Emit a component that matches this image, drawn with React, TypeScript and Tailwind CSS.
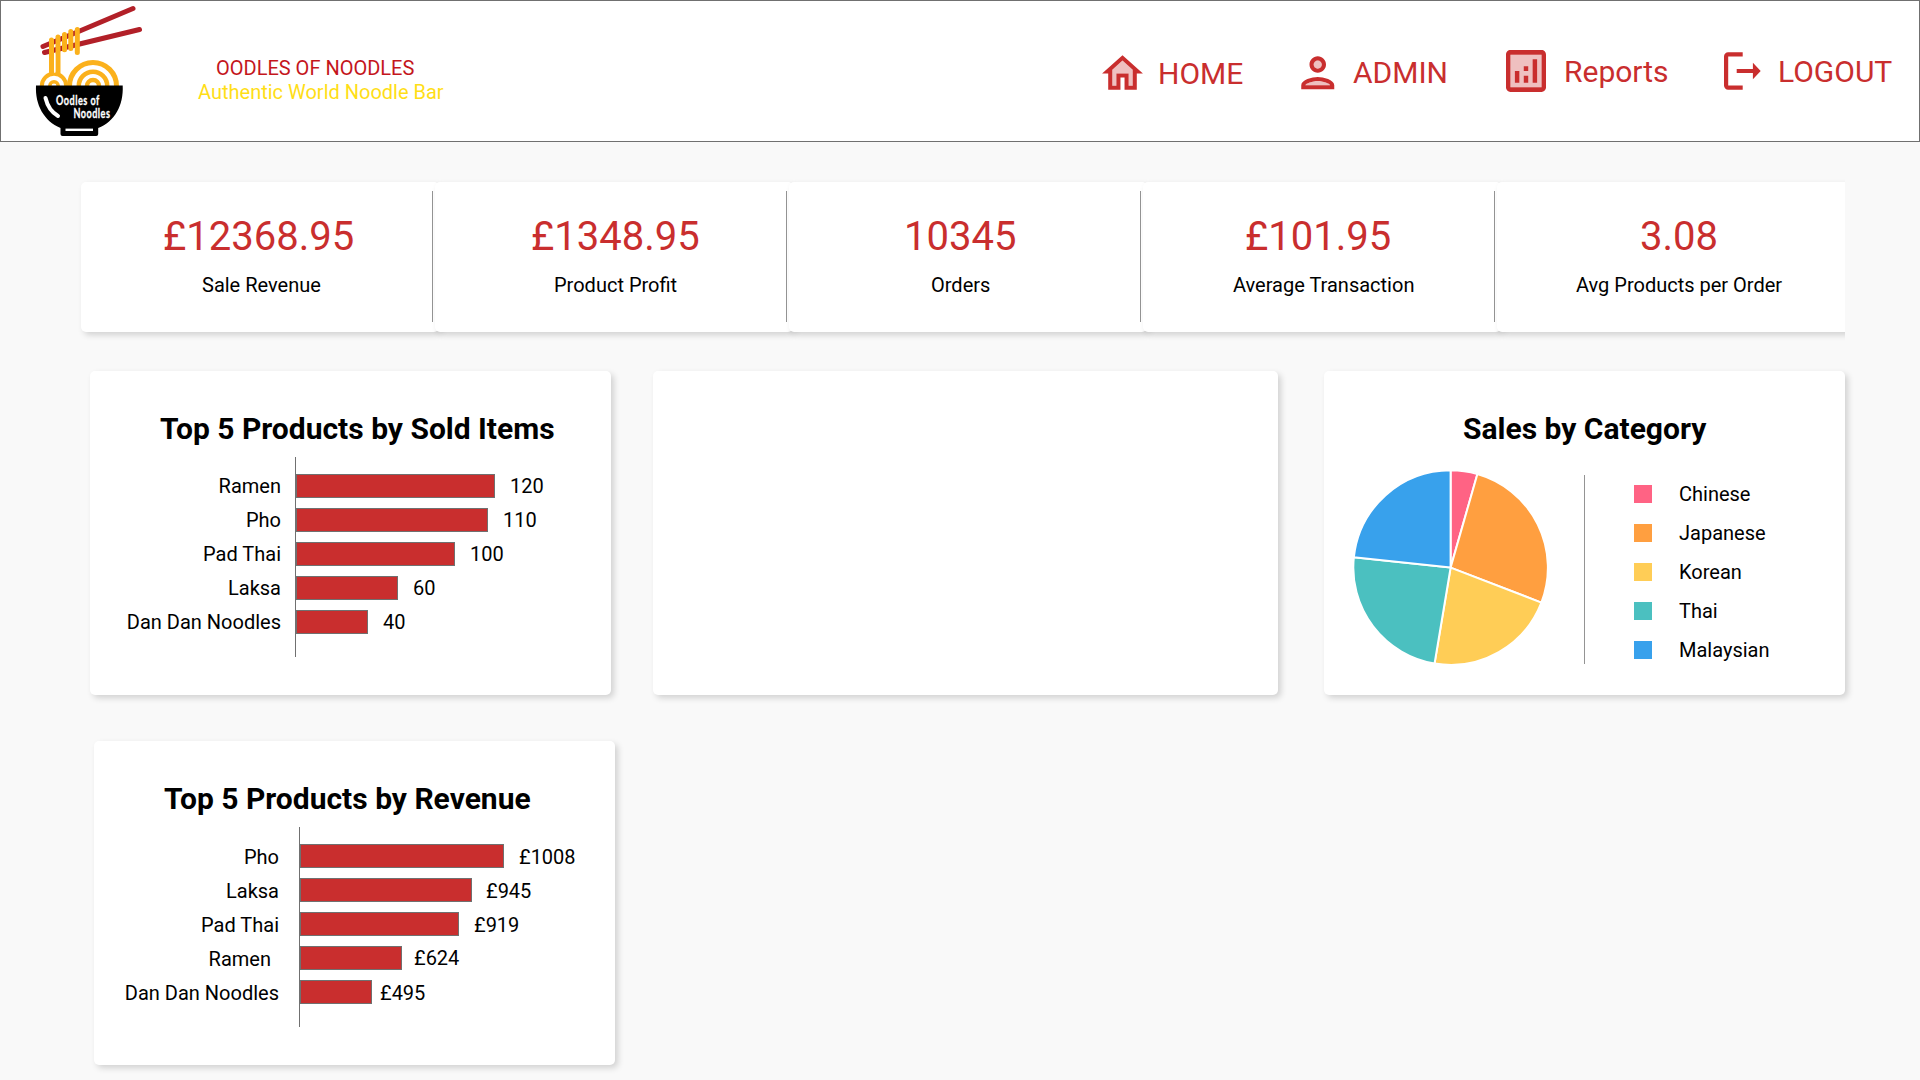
import React from 'react';

const stats = [
  { value: '£12368.95', label: 'Sale Revenue', vx: 'left-[82px]', lx: 'left-[121px]', line: true },
  { value: '£1348.95', label: 'Product Profit', vx: 'left-[96px]', lx: 'left-[119px]', line: true },
  { value: '10345', label: 'Orders', vx: 'left-[115px]', lx: 'left-[142px]', line: true },
  { value: '£101.95', label: 'Average Transaction', vx: 'left-[102px]', lx: 'left-[90px]', line: true },
  { value: '3.08', label: 'Avg Products per Order', vx: 'left-[143px]', lx: 'left-[79px]', line: false },
];

type Row = { name: string; value: string; bar: string; shift?: string; lift?: string; gap: string };

const sold: Row[] = [
  { name: 'Ramen', value: '120', bar: 'w-[199px]', gap: 'ml-[15px]' },
  { name: 'Pho', value: '110', bar: 'w-[192px]', gap: 'ml-[15px]' },
  { name: 'Pad Thai', value: '100', bar: 'w-[159px]', gap: 'ml-[15px]' },
  { name: 'Laksa', value: '60', bar: 'w-[102px]', gap: 'ml-[15px]' },
  { name: 'Dan Dan Noodles', value: '40', bar: 'w-[72px]', gap: 'ml-[15px]' },
];

const revenue: Row[] = [
  { name: 'Pho', value: '£1008', bar: 'w-[204px]', gap: 'ml-[15px]' },
  { name: 'Laksa', value: '£945', bar: 'w-[172px]', gap: 'ml-[14px]' },
  { name: 'Pad Thai', value: '£919', bar: 'w-[159px]', gap: 'ml-[15px]' },
  { name: 'Ramen', value: '£624', bar: 'w-[102px]', gap: 'ml-[12px]', shift: 'pr-2', lift: '-mt-px' },
  { name: 'Dan Dan Noodles', value: '£495', bar: 'w-[72px]', gap: 'ml-[8px]' },
];

const slices = [
  { name: 'Chinese', from: 0, to: 16, fill: '#ff6384', bg: 'bg-[#ff6384]' },
  { name: 'Japanese', from: 16, to: 111.1, fill: '#ff9f40', bg: 'bg-[#ff9f40]' },
  { name: 'Korean', from: 111.1, to: 189.5, fill: '#ffcd56', bg: 'bg-[#ffcd56]' },
  { name: 'Thai', from: 189.5, to: 276.1, fill: '#4bc0c0', bg: 'bg-[#4bc0c0]' },
  { name: 'Malaysian', from: 276.1, to: 360, fill: '#38a1ec', bg: 'bg-[#38a1ec]' },
];

const CARD = 'rounded-[5px] bg-white shadow-[3px_3px_6px_rgba(0,0,0,0.16)]';

function Logo() {
  return (
    <svg width="120" height="134" viewBox="30 4 120 134" className="block">
      <g stroke="#b22028" strokeWidth="5" strokeLinecap="round">
        <path d="M43 46.5L133 8.5" />
        <path d="M44.5 52.5L139.5 29.5" />
      </g>
      <g fill="none" stroke="#fbb11c">
        <circle cx="93" cy="86" r="23.500" strokeWidth="5" />
        <circle cx="93" cy="86" r="14.200" strokeWidth="4.500" />
        <circle cx="93" cy="86" r="6" strokeWidth="4.500" />
        <circle cx="54" cy="86" r="12.200" strokeWidth="4" />
        <circle cx="54" cy="86" r="4.200" strokeWidth="3.500" />
      </g>
      <g stroke="#fbb11c" strokeLinecap="round" strokeWidth="5">
        <path d="M51.500 40V73M58 37V73M64.500 34.500V49.800M70.800 31.500V48.500M77.300 29.500V52.500" />
      </g>
      <path d="M54.800 54V73" stroke="#fff" strokeWidth="1" />
      <path d="M36 85.500h86.700c1 20-8 36-24.500 42.500V134a2 2 0 0 1-2 2H62.500a2 2 0 0 1-2-2v-6C44 121 35 105 36 85.500z" />
      <path d="M45.500 98q3 12.500 12.500 18" fill="none" stroke="#fff" strokeWidth="4" strokeLinecap="round" />
      <path d="M65.500 129.800H93" stroke="#fff" strokeWidth="2.400" />
      <g fill="#fff" stroke="#fff" strokeWidth=".3" fontFamily="Lato, sans-serif" fontWeight="700" fontSize="13">
        <text transform="translate(56 104.700) scale(.7 1)" textLength="62">Oodles of</text>
        <text transform="translate(73.500 118) scale(.7 1)" textLength="52">Noodles</text>
      </g>
    </svg>
  );
}

function HomeIcon() {
  return (
    <svg width="49" height="49" viewBox="0 0 24 24" fill="#c92e2e" className="block">
      <path d="M7 10.190V18h2v-6h6v6h2v-7.810l-5-4.500z" opacity=".3" />
      <path d="M12 3L2 12h3v8h6v-6h2v6h6v-8h3L12 3zm5 15h-2v-6H9v6H7v-7.810l5-4.500 5 4.500V18z" />
    </svg>
  );
}

function PersonIcon() {
  return (
    <svg width="49.5" height="49.5" viewBox="0 0 24 24" fill="#c92e2e" className="block">
      <g opacity=".3">
        <path d="M12 16c-2.690 0-5.770 1.280-6 2h12c-.2-.71-3.300-2-6-2z" />
        <circle cx="12" cy="8" r="2" />
      </g>
      <path d="M12 12c2.210 0 4-1.790 4-4s-1.790-4-4-4-4 1.790-4 4 1.790 4 4 4zm0-6c1.100 0 2 .9 2 2s-.9 2-2 2-2-.9-2-2 .9-2 2-2zm0 8c-2.670 0-8 1.340-8 4v2h16v-2c0-2.660-5.330-4-8-4zm6 4H6c.22-.72 3.310-2 6-2 2.700 0 5.800 1.290 6 2z" />
    </svg>
  );
}

function ReportsIcon() {
  return (
    <svg width="40" height="42" viewBox="3 3 18 18" preserveAspectRatio="none" fill="#c92e2e" className="block">
      <path d="M5 5h14v14H5z" opacity=".3" />
      <path d="M19 3H5c-1.100 0-2 .9-2 2v14c0 1.100.9 2 2 2h14c1.100 0 2-.9 2-2V5c0-1.100-.9-2-2-2zm0 16H5V5h14v14zM7 12h2v5H7zM15 7h2v10h-2zM11 14h2v3h-2zM11 10h2v2h-2z" />
    </svg>
  );
}

function LogoutIcon() {
  return (
    <svg width="37" height="38" viewBox="0 0 37 38" fill="#c92e2e" className="block">
      <path d="M18.700.3H4.200A4.100 4.100 0 0 0 0 4.400v29.200a4.100 4.100 0 0 0 4.200 4.100h14.500v-4.100H4.200V4.400h14.500z" />
      <path d="M12.700 17h16.200v-6.200L36.700 19l-7.800 8.200V21H12.700z" />
    </svg>
  );
}

function BarCard({ title, rows, axis, textTop, place }: { title: string; rows: Row[]; axis: string; textTop: string; place: string }) {
  return (
    <section className={`h-[324px] w-[521px] shrink-0 ${CARD} ${place}`}>
      <h2 className="pt-[40px] pl-[70px] text-[30px] leading-[35px] font-bold whitespace-nowrap">{title}</h2>
      <div className="mt-[11px] flex">
        <div className={`flex w-[205px] flex-col gap-[10px] pt-[17px] text-right ${axis}`}>
          {rows.map((r) => (
            <div key={r.name} className={`h-6 leading-6 whitespace-nowrap ${textTop} ${r.shift ?? ''}`}>{r.name}</div>
          ))}
        </div>
        <div className="flex h-[200px] flex-col gap-[10px] border-l border-[#707070] pt-[17px]">
          {rows.map((r) => (
            <div key={r.name} className="flex h-6">
              <div className={`h-6 border border-[#707070] bg-[#c92e2e] ${r.bar}`} />
              <div className={`leading-6 ${textTop} ${r.gap}`}>
                <div className={r.lift ?? ''}>{r.value}</div>
              </div>
            </div>
          ))}
        </div>
      </div>
    </section>
  );
}

const point = (deg: number) => {
  const a = (deg * Math.PI) / 180;
  return `${97.6 + 97.3 * Math.sin(a)} ${97.6 - 97.3 * Math.cos(a)}`;
};

function Pie() {
  return (
    <svg width="196" height="196" viewBox="0 0 196 196" className="block">
      {slices.map((s) => (
        <path key={s.name} d={`M97.600 97.600L${point(s.from)}A97.300 97.300 0 0 1 ${point(s.to)}Z`} fill={s.fill} stroke="#fff" strokeWidth="2" strokeLinejoin="round" />
      ))}
    </svg>
  );
}

export default function App() {
  return (
    <div className="h-[1080px] w-[1920px] overflow-hidden bg-[#f9f9f9] font-['Roboto',sans-serif] text-[20px] text-black">
      <header className="flex h-[142px] border border-[#707070] bg-white text-[#c92e2e]">
        <div className="mt-[3px] ml-[29px] w-[120px]">
          <Logo />
        </div>
        <div className="mt-[55px] ml-[48px] w-[260px] leading-6 whitespace-nowrap">
          <div className="pl-[18px] text-[#c4161c]">OODLES OF NOODLES</div>
          <div className="text-[#ffde17]">Authentic World Noodle Bar</div>
        </div>
        <nav className="ml-auto flex text-[30px] leading-[36px] whitespace-nowrap">
          <div className="flex w-[195px]">
            <div className="mt-[48px] w-[60px]"><HomeIcon /></div>
            <span className="mt-[55px]">HOME</span>
          </div>
          <div className="flex w-[213px]">
            <div className="mt-[47px] w-[60px]"><PersonIcon /></div>
            <span className="mt-[54px]">ADMIN</span>
          </div>
          <div className="flex w-[218px]">
            <div className="mt-[49px] w-[58px]"><ReportsIcon /></div>
            <span className="mt-[53px]">Reports</span>
          </div>
          <div className="flex w-[195px]">
            <div className="mt-[51px] w-[54px]"><LogoutIcon /></div>
            <span className="mt-[53px]">LOGOUT</span>
          </div>
        </nav>
      </header>

      <main>
        <div className="ml-[71px] flex h-[229px] w-[1774px] overflow-hidden pt-[40px] pl-[10px]">
          {stats.map((s) => (
            <div key={s.label} className={`relative -mr-[4px] h-[150px] w-[358px] shrink-0 whitespace-nowrap ${CARD}`}>
              <div className={`absolute top-[31px] text-[40px] leading-[48px] text-[#c92e2e] ${s.vx}`}>{s.value}</div>
              <div className={`absolute top-[91px] leading-6 ${s.lx}`}>{s.label}</div>
              {s.line && <div className="absolute top-[9px] left-[351px] h-[131px] w-px bg-[#949494]" />}
            </div>
          ))}
        </div>

        <div className="ml-[90px] flex h-[370px]">
          <BarCard title="Top 5 Products by Sold Items" rows={sold} axis="pr-[14px]" textTop="pt-0" place="" />
          <section className={`ml-[42px] h-[324px] w-[625px] ${CARD}`} />
          <section className={`ml-[46px] h-[324px] w-[521px] ${CARD}`}>
            <h2 className="pt-[40px] pl-[139px] text-[30px] leading-[35px] font-bold">Sales by Category</h2>
            <div className="flex">
              <div className="mt-[24px] ml-[29px]"><Pie /></div>
              <div className="mt-[29px] ml-[35px] h-[189px] w-px bg-[#949494]" />
              <ul className="mt-[36px] ml-[49px] flex flex-col gap-[15px]">
                {slices.map((s) => (
                  <li key={s.name} className="flex h-6 items-center leading-6">
                    <span className={`size-[18px] ${s.bg}`} />
                    <span className="ml-[27px]">{s.name}</span>
                  </li>
                ))}
              </ul>
            </div>
          </section>
        </div>

        <BarCard title="Top 5 Products by Revenue" rows={revenue} axis="pr-[20px]" textTop="pt-px" place="ml-[94px]" />
      </main>
    </div>
  );
}
